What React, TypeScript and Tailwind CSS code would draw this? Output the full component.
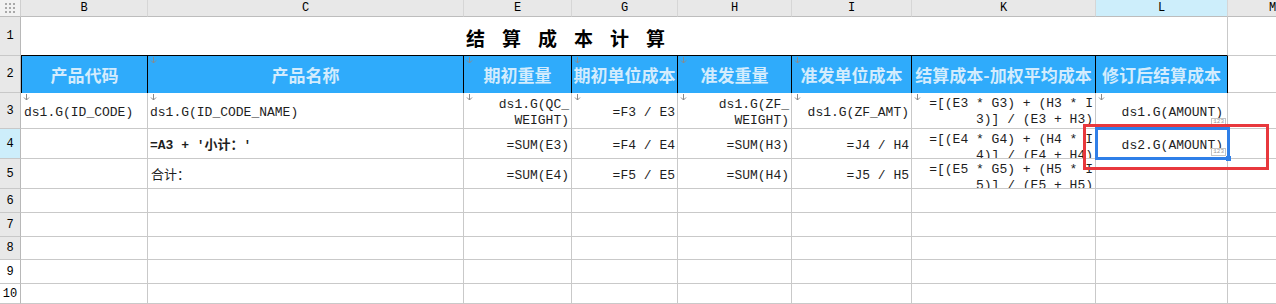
import React from "react";

const mono = { fontFamily: "'Liberation Mono', 'Noto Sans CJK SC', monospace" };
const cjk = { fontFamily: "'Noto Sans CJK SC', 'Noto Sans', sans-serif" };

function Arrow() {
  return (
    <svg className="absolute left-[2px] top-[1px]" width="7" height="7" viewBox="0 0 7 7">
      <path d="M3.5 0 V6 M1 3.5 L3.5 6 L6 3.5" stroke="#8a8a8a" strokeWidth="1" fill="none" />
    </svg>
  );
}

function Badge() {
  return (
    <span className="absolute right-[1px] bottom-[2px] border border-[#c4c4c4] bg-white px-[1px] text-[6px] leading-[6px] text-[#9a9a9a]" style={mono}>
      123
    </span>
  );
}

const colHeads = ["B", "C", "E", "G", "H", "I", "K", "L", "M"];

export default function App() {
  const rowHead = (n: number, extra: string) => (
    <div
      key={"r" + n}
      className={`flex items-center justify-center border-r border-b border-r-[#b8b8b8] border-b-[#c8c8c8] text-[12px] text-black ${extra}`}
      style={mono}
    >
      {n}
    </div>
  );

  const body = "relative overflow-hidden border-r border-b border-[#c9c9c9] bg-white text-[13px] leading-[16px] text-[#1e1e1e]";

  return (
    <div className="relative h-[304px] w-[1276px] overflow-hidden bg-white">
      <div className="grid grid-cols-[21px_127px_316px_108px_106px_114px_120px_184px_132px_90px] grid-rows-[17px_39px_37px_36px_30px_30px_24px_24px_23px_24px_20px]">
        {/* column header row */}
        <div className="flex items-center justify-center border-r border-b border-r-[#cfcfcf] border-b-[#bdbdbd] bg-[#f2f2f2]">
          <div className="grid grid-cols-3 gap-[2px]">
            {Array.from({ length: 9 }).map((_, i) => (
              <span key={i} className="h-[2px] w-[2px] bg-[#a9a9a9]" />
            ))}
          </div>
        </div>
        {colHeads.map((c) => (
          <div
            key={c}
            className={`flex items-center justify-center border-r border-b border-r-[#d6d6d6] border-b-[#bdbdbd] text-[12px] text-black ${c === "L" ? "bg-[#cdeefb]" : "bg-[#e8e8e8]"}`}
            style={mono}
          >
            {c}
          </div>
        ))}

        {/* row 1 */}
        {rowHead(1, "bg-[#e8e8e8]")}
        <div className="col-span-8 flex items-center border-r border-b border-r-[#c9c9c9] border-b-black pl-[445px] pt-[4px]">
          <span className="text-[19px] font-bold tracking-[17px] text-black" style={cjk}>
            结算成本计算
          </span>
        </div>
        <div className="border-b border-[#c9c9c9]" />

        {/* row 2 */}
        {rowHead(2, "bg-[#e8e8e8]")}
        {[
          ["产品代码", false],
          ["产品名称", true],
          ["期初重量", true],
          ["期初单位成本", true],
          ["准发重量", true],
          ["准发单位成本", true],
          ["结算成本-加权平均成本", false],
          ["修订后结算成本", false],
        ].map(([t, a], i) => (
          <div
            key={"h" + i}
            className={`relative flex items-center justify-center whitespace-nowrap border-r border-r-black bg-[#2fabfb] text-[17px] font-bold text-[#d3ecfd] ${i === 0 ? "border-l border-l-black" : ""}`}
            style={cjk}
          >
            {a ? <Arrow /> : null}
            {t as string}
          </div>
        ))}
        <div className="border-b border-[#c9c9c9]" />

        {/* row 3 */}
        {rowHead(3, "bg-[#e8e8e8]")}
        <div className={`${body} flex items-center pl-[3px] pt-[5px]`} style={mono}>
          <Arrow />
          ds1.G(ID_CODE)
        </div>
        <div className={`${body} flex items-center pl-[2px] pt-[5px]`} style={mono}>
          <Arrow />
          ds1.G(ID_CODE_NAME)
        </div>
        <div className={`${body} flex flex-col items-end pr-[2px] pt-[4px]`} style={mono}>
          <Arrow />
          <span>ds1.G(QC_</span>
          <span>WEIGHT)</span>
        </div>
        <div className={`${body} flex items-center justify-end pr-[2px] pt-[5px]`} style={mono}>
          <Arrow />
          =F3 / E3
        </div>
        <div className={`${body} flex flex-col items-end pr-[2px] pt-[4px]`} style={mono}>
          <Arrow />
          <span>ds1.G(ZF_</span>
          <span>WEIGHT)</span>
        </div>
        <div className={`${body} flex items-center justify-end pr-[2px] pt-[5px]`} style={mono}>
          <Arrow />
          ds1.G(ZF_AMT)
        </div>
        <div className={`${body} flex flex-col items-end pr-[2px] pt-[3px]`} style={mono}>
          <Arrow />
          <span className="whitespace-pre">=[(E3 * G3) + (H3 * I</span>
          <span className="whitespace-pre">3)] / (E3 + H3)</span>
        </div>
        <div className={`${body} flex items-center justify-end pr-[4px] pt-[5px]`} style={mono}>
          <Arrow />
          ds1.G(AMOUNT)
          <Badge />
        </div>
        <div className="border-b border-[#c9c9c9]" />

        {/* row 4 */}
        {rowHead(4, "bg-[#cdeefb]")}
        <div className={body} />
        <div className={`${body} flex items-center pl-[2px] pt-[5px] font-bold`} style={mono}>
          =A3 + '小计：'
        </div>
        <div className={`${body} flex items-center justify-end pr-[2px] pt-[5px]`} style={mono}>=SUM(E3)</div>
        <div className={`${body} flex items-center justify-end pr-[2px] pt-[5px]`} style={mono}>=F4 / E4</div>
        <div className={`${body} flex items-center justify-end pr-[2px] pt-[5px]`} style={mono}>=SUM(H3)</div>
        <div className={`${body} flex items-center justify-end pr-[2px] pt-[5px]`} style={mono}>=J4 / H4</div>
        <div className={`${body} flex flex-col items-end pr-[2px] pt-[3px]`} style={mono}>
          <span className="whitespace-pre">=[(E4 * G4) + (H4 * I</span>
          <span className="whitespace-pre">4)] / (E4 + H4)</span>
        </div>
        <div className={`${body} flex items-center justify-end pr-[4px] pt-[5px]`} style={mono}>
          ds2.G(AMOUNT)
          <Badge />
        </div>
        <div className="border-b border-[#c9c9c9]" />

        {/* row 5 */}
        {rowHead(5, "bg-[#e8e8e8]")}
        <div className={body} />
        <div className={`${body} flex items-center pl-[3px] pt-[5px]`} style={mono}>合计：</div>
        <div className={`${body} flex items-center justify-end pr-[2px] pt-[5px]`} style={mono}>=SUM(E4)</div>
        <div className={`${body} flex items-center justify-end pr-[2px] pt-[5px]`} style={mono}>=F5 / E5</div>
        <div className={`${body} flex items-center justify-end pr-[2px] pt-[5px]`} style={mono}>=SUM(H4)</div>
        <div className={`${body} flex items-center justify-end pr-[2px] pt-[5px]`} style={mono}>=J5 / H5</div>
        <div className={`${body} flex flex-col items-end pr-[2px] pt-[3px]`} style={mono}>
          <span className="whitespace-pre">=[(E5 * G5) + (H5 * I</span>
          <span className="whitespace-pre">5)] / (E5 + H5)</span>
        </div>
        <div className={body} />
        <div className="border-b border-[#c9c9c9]" />

        {/* empty rows 6-10 */}
        {[6, 7, 8, 9, 10].map((n) => (
          <React.Fragment key={"e" + n}>
            {rowHead(n, n >= 9 ? "bg-white" : "bg-[#e8e8e8]")}
            {Array.from({ length: 8 }).map((_, i) => (
              <div key={i} className={body} />
            ))}
            <div className="border-b border-[#c9c9c9]" />
          </React.Fragment>
        ))}
      </div>

      {/* selection overlays */}
      <div className="pointer-events-none absolute left-[1095px] top-[127px] h-[33px] w-[135px] border-[3px] border-[#2f7fe8]" />
      <div className="pointer-events-none absolute left-[1226px] top-[156px] h-[5px] w-[5px] bg-[#2f7fe8]" />
      <div className="pointer-events-none absolute left-[1083px] top-[124px] h-[46px] w-[186px] border-[3px] border-[#e8383d]" />
    </div>
  );
}
